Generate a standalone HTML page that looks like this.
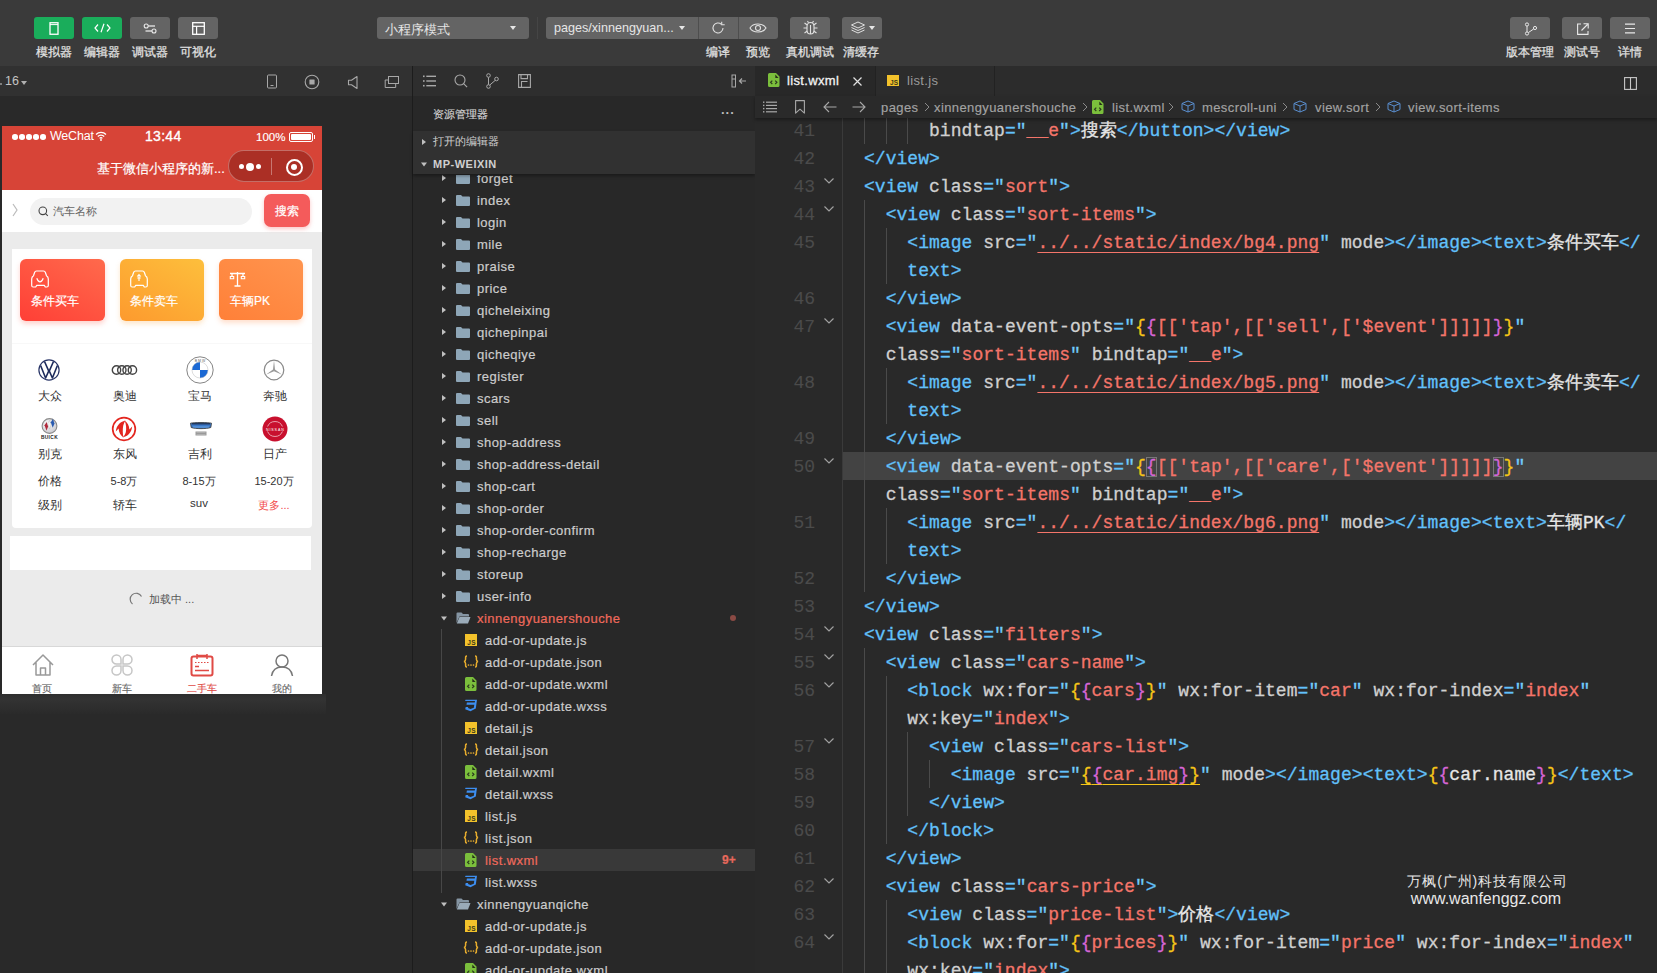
<!DOCTYPE html>
<html><head><meta charset="utf-8">
<style>
*{margin:0;padding:0;box-sizing:border-box}
html,body{width:1657px;height:973px;overflow:hidden;background:#262626;font-family:"Liberation Sans",sans-serif}
.a{position:absolute}
#tb{left:0;top:0;width:1657px;height:66px;background:#3a3a3a}
.btn{position:absolute;top:17px;height:22px;border-radius:3px;background:#646464}
.btn.g{background:#1aad5b}
.lbl{position:absolute;top:44px;font-size:12px;color:#e2e2e2;text-align:center;white-space:nowrap;-webkit-text-stroke:0.25px}
#simh{left:0;top:66px;width:412px;height:30px;background:#313131}
#sim{left:0;top:96px;width:412px;height:877px;background:#292929}
#div1{left:412px;top:66px;width:1px;height:907px;background:#1c1c1c}
#tree{left:413px;top:66px;width:342px;height:907px;background:#2e2e2e}
#ed{left:755px;top:66px;width:902px;height:907px;background:#262626}
.lab{font-size:11.5px;color:#333;width:26px;text-align:center;white-space:nowrap}
.lab2{font-size:11px;color:#333;text-align:center;white-space:nowrap}
.tl{top:556px;width:40px;text-align:center;font-size:10px;color:#6a6a6a;-webkit-text-stroke:0.15px}
.tr{position:absolute;left:0;width:342px;height:22px;font-size:13px;letter-spacing:0.45px}
.tr span{white-space:nowrap;-webkit-text-stroke:0.2px}
.code{font-family:"Liberation Mono",monospace;font-size:18px;line-height:28px;height:28px;white-space:pre;padding-top:1px;-webkit-text-stroke:0.3px;letter-spacing:0.037px}
.code span{white-space:pre}
.ln{left:0;width:60px;text-align:right;font-family:"Liberation Mono",monospace;font-size:18px;line-height:28px;color:#4b4b4b;padding-top:1px;-webkit-text-stroke:0.1px}
.bc{font-size:13px;color:#a3a3a3;white-space:nowrap;letter-spacing:0.4px;padding-top:1px;-webkit-text-stroke:0.15px}
</style></head><body>
<div id="tb" class="a">
<div class="btn g" style="left:34px;width:40px"><svg class="a" style="left:15px;top:5px" width="10" height="13" viewBox="0 0 10 13"><rect x="1" y="0.75" width="8" height="11.5" fill="none" stroke="#fff" stroke-width="1.3"/><line x1="1" y1="2.6" x2="9" y2="2.6" stroke="#fff" stroke-width="1"/></svg></div>
<div class="btn g" style="left:82px;width:40px"><svg class="a" style="left:12px;top:6px" width="17" height="10" viewBox="0 0 17 10"><path d="M4 1.5L1 5l3 3.5M13 1.5l3 3.5-3 3.5M10 0.8L7 9.2" fill="none" stroke="#fff" stroke-width="1.2"/></svg></div>
<div class="btn" style="left:130px;width:40px"><svg class="a" style="left:13px;top:6px" width="15" height="11" viewBox="0 0 15 11"><circle cx="3.2" cy="3" r="2" fill="none" stroke="#e8e8e8" stroke-width="1.1"/><line x1="5.2" y1="3" x2="12" y2="3" stroke="#e8e8e8" stroke-width="1.3"/><circle cx="11" cy="8" r="2" fill="none" stroke="#e8e8e8" stroke-width="1.1"/><line x1="2.5" y1="8" x2="9" y2="8" stroke="#e8e8e8" stroke-width="1.3"/></svg></div>
<div class="btn" style="left:178px;width:40px"><svg class="a" style="left:14px;top:5px" width="13" height="13" viewBox="0 0 13 13"><rect x="0.7" y="0.7" width="11.6" height="11.6" fill="none" stroke="#fff" stroke-width="1.3"/><line x1="0.7" y1="4.3" x2="12.3" y2="4.3" stroke="#fff" stroke-width="1.2"/><line x1="4.6" y1="4.3" x2="4.6" y2="12.3" stroke="#fff" stroke-width="1.2"/></svg></div>
<div class="lbl" style="left:34px;width:40px">模拟器</div>
<div class="lbl" style="left:82px;width:40px">编辑器</div>
<div class="lbl" style="left:130px;width:40px">调试器</div>
<div class="lbl" style="left:178px;width:40px">可视化</div>

<div class="btn" style="left:377px;width:152px"><span class="a" style="left:8px;top:4px;font-size:13px;color:#e6e6e6">小程序模式</span><svg class="a" style="left:133px;top:9px" width="6" height="4"><path d="M0 0h6L3 4z" fill="#e6e6e6"/></svg></div>
<div class="a" style="left:537px;top:17px;width:1px;height:22px;background:#454545"></div>
<div class="btn" style="left:546px;width:232px"><span class="a" style="left:8px;top:4px;font-size:12.6px;color:#e6e6e6">pages/xinnengyuan...</span><svg class="a" style="left:133px;top:9px" width="6" height="4"><path d="M0 0h6L3 4z" fill="#e6e6e6"/></svg>
<div class="a" style="left:152px;top:0;width:1px;height:22px;background:#4e4e4e"></div><div class="a" style="left:192px;top:0;width:1px;height:22px;background:#4e4e4e"></div>
<svg class="a" style="left:164px;top:3px" width="16" height="16" viewBox="0 0 16 16"><path d="M13 8a5 5 0 1 1-1.6-3.7" fill="none" stroke="#e0e0e0" stroke-width="1.1"/><path d="M11.7 1.8v3h3" fill="none" stroke="#e0e0e0" stroke-width="1.1"/></svg>
<svg class="a" style="left:203px;top:5px" width="18" height="12" viewBox="0 0 18 12"><path d="M1 6C4 0.6 14 0.6 17 6C14 11.4 4 11.4 1 6z" fill="none" stroke="#e0e0e0" stroke-width="1.1"/><circle cx="9" cy="6" r="2.5" fill="none" stroke="#e0e0e0" stroke-width="1.1"/></svg>
</div>
<div class="btn" style="left:790px;width:40px"><svg class="a" style="left:12px;top:3px" width="17" height="16" viewBox="0 0 17 16"><path d="M5 6.5c0-2.5 1.6-4 3.5-4s3.5 1.5 3.5 4v4c0 2.2-1.6 3.5-3.5 3.5S5 12.7 5 10.5z" fill="none" stroke="#e0e0e0" stroke-width="1.1"/><path d="M8.5 5v9M5 8H1.5M12 8h3.5M5.3 5L2.5 3M11.7 5l2.8-2M5.3 11L2.5 13M11.7 11l2.8 2M6.5 2.8L5.5 1M10.5 2.8l1-1.8" fill="none" stroke="#e0e0e0" stroke-width="1.1"/></svg></div>
<div class="btn" style="left:842px;width:40px"><svg class="a" style="left:8px;top:4px" width="16" height="14" viewBox="0 0 16 14"><path d="M8 1L1.5 4 8 7l6.5-3z" fill="none" stroke="#e0e0e0" stroke-width="1"/><path d="M1.5 6.5L8 9.5l6.5-3M1.5 9L8 12l6.5-3" fill="none" stroke="#e0e0e0" stroke-width="1"/></svg><svg class="a" style="left:27px;top:9px" width="6" height="4"><path d="M0 0h6L3 4z" fill="#e6e6e6"/></svg></div>
<div class="lbl" style="left:698px;width:40px">编译</div>
<div class="lbl" style="left:738px;width:40px">预览</div>
<div class="lbl" style="left:786px;width:48px">真机调试</div>
<div class="lbl" style="left:841px;width:40px">清缓存</div>

<div class="btn" style="left:1510px;width:40px"><svg class="a" style="left:14px;top:5px" width="14" height="14" viewBox="0 0 14 14"><circle cx="3" cy="2.5" r="1.6" fill="none" stroke="#e8e8e8" stroke-width="1"/><circle cx="3" cy="11.5" r="1.6" fill="none" stroke="#e8e8e8" stroke-width="1"/><circle cx="11" cy="6" r="1.6" fill="none" stroke="#e8e8e8" stroke-width="1"/><path d="M3 4.1v5.8M4.5 10.5L9.6 7" fill="none" stroke="#e8e8e8" stroke-width="1"/></svg></div>
<div class="btn" style="left:1562px;width:40px"><svg class="a" style="left:15px;top:6px" width="12" height="12" viewBox="0 0 12 12"><path d="M4 1H0.6v10.4H11V8" fill="none" stroke="#e8e8e8" stroke-width="1.1"/><path d="M4.5 7.5L10.5 1.5M6.5 0.8h4.7v4.7" fill="none" stroke="#e8e8e8" stroke-width="1.1"/></svg></div>
<div class="btn" style="left:1610px;width:40px"><svg class="a" style="left:15px;top:6px" width="10" height="11" viewBox="0 0 10 11"><path d="M0 1.2h10M0 5.5h10M0 9.8h10" stroke="#e8e8e8" stroke-width="1.2"/></svg></div>
<div class="lbl" style="left:1502px;width:56px">版本管理</div>
<div class="lbl" style="left:1562px;width:40px">测试号</div>
<div class="lbl" style="left:1610px;width:40px">详情</div>
</div>

<div id="simh" class="a">
<div class="a" style="left:0;top:17px;width:2px;height:2px;border-radius:1px;background:#9a9a9a"></div>
<span class="a" style="left:5px;top:8px;font-size:12.5px;color:#c4c4c4">16</span>
<svg class="a" style="left:21px;top:15px" width="6" height="4"><path d="M0 0h6L3 4z" fill="#b0b0b0"/></svg>
<svg class="a" style="left:266px;top:8px" width="12" height="15" viewBox="0 0 12 15"><rect x="1.5" y="1" width="9" height="13" rx="1" fill="none" stroke="#a8a8a8" stroke-width="1"/><line x1="4.5" y1="11.5" x2="7.5" y2="11.5" stroke="#a8a8a8" stroke-width="1"/></svg>
<svg class="a" style="left:304px;top:8px" width="16" height="16" viewBox="0 0 16 16"><circle cx="8" cy="8" r="6.8" fill="none" stroke="#a8a8a8" stroke-width="1.1"/><rect x="5.4" y="5.4" width="5.2" height="5.2" rx="0.5" fill="#a8a8a8"/></svg>
<svg class="a" style="left:347px;top:9px" width="12" height="15" viewBox="0 0 12 15"><path d="M10 1.5v12L4.5 9.8H1.5V5.2h3z" fill="none" stroke="#a8a8a8" stroke-width="1.1" stroke-linejoin="round"/></svg>
<svg class="a" style="left:384px;top:9px" width="16" height="14" viewBox="0 0 16 14"><rect x="4.5" y="1.5" width="10" height="7" fill="none" stroke="#a8a8a8" stroke-width="1"/><path d="M4.5 5H1.2v7.5h10.5V8.5" fill="none" stroke="#a8a8a8" stroke-width="1"/></svg>
</div>
<div id="sim" class="a"></div>
<div class="a" style="left:0;top:694px;width:326px;height:20px;background:linear-gradient(180deg,#2e2e2e 0%,#333 25%,#2a2a2a 100%)"></div>
<div id="phone" class="a" style="left:2px;top:126px;width:320px;height:568px;background:#ebebeb;overflow:hidden">
 <div class="a" style="left:0;top:0;width:320px;height:64px;background:#d74437"></div>
 <div class="a" style="left:10px;top:8px;width:35px;height:6px">
  <i class="a" style="left:0;top:0;width:5.5px;height:5.5px;border-radius:50%;background:#fff"></i><i class="a" style="left:7px;top:0;width:5.5px;height:5.5px;border-radius:50%;background:#fff"></i><i class="a" style="left:14px;top:0;width:5.5px;height:5.5px;border-radius:50%;background:#fff"></i><i class="a" style="left:21px;top:0;width:5.5px;height:5.5px;border-radius:50%;background:#fff"></i><i class="a" style="left:28px;top:0;width:5.5px;height:5.5px;border-radius:50%;background:#fff"></i>
 </div>
 <span class="a" style="left:48px;top:3px;font-size:12.5px;color:#fff;letter-spacing:-0.2px">WeChat</span>
 <svg class="a" style="left:93px;top:5px" width="12" height="10" viewBox="0 0 12 10"><path d="M1 3.5a7 7 0 0 1 10 0M2.8 5.5a4.5 4.5 0 0 1 6.4 0M4.6 7.4a2 2 0 0 1 2.8 0" fill="none" stroke="#fff" stroke-width="1.3"/><circle cx="6" cy="9" r="0.9" fill="#fff"/></svg>
 <span class="a" style="left:143px;top:2px;font-size:14px;color:#fff;-webkit-text-stroke:0.35px;letter-spacing:0.3px">13:44</span>
 <span class="a" style="left:254px;top:5px;font-size:11.5px;color:#fff;-webkit-text-stroke:0.15px">100%</span>
 <div class="a" style="left:287px;top:6px;width:24px;height:10px;border:1px solid #fff;border-radius:2px;padding:1px"><div style="width:100%;height:100%;background:#fff;border-radius:1px"></div></div>
 <div class="a" style="left:311.5px;top:9px;width:1.5px;height:4px;background:#fff"></div>
 <span class="a" style="left:95px;top:34px;font-size:13px;color:#fff;white-space:nowrap;-webkit-text-stroke:0.2px">基于微信小程序的新...</span>
 <div class="a" style="left:226px;top:24px;width:86px;height:32px;border-radius:16px;background:rgba(90,10,5,0.35);border:1px solid rgba(255,255,255,0.3)"></div>
 <i class="a" style="left:237px;top:38px;width:5px;height:5px;border-radius:50%;background:#fff"></i>
 <i class="a" style="left:244px;top:36.5px;width:8px;height:8px;border-radius:50%;background:#fff"></i>
 <i class="a" style="left:254px;top:38px;width:5px;height:5px;border-radius:50%;background:#fff"></i>
 <div class="a" style="left:269px;top:32px;width:1px;height:17px;background:rgba(255,255,255,0.35)"></div>
 <div class="a" style="left:283.5px;top:32.5px;width:17px;height:17px;border-radius:50%;border:2.2px solid #fff"></div>
 <i class="a" style="left:289px;top:38px;width:6px;height:6px;border-radius:50%;background:#fff"></i>

 <div class="a" style="left:0;top:64px;width:320px;height:42px;background:#fff"></div>
 <svg class="a" style="left:10px;top:77px" width="6" height="14" viewBox="0 0 6 14"><path d="M1 1l4 6-4 6" fill="none" stroke="#bbb" stroke-width="1.2"/></svg>
 <div class="a" style="left:28px;top:72px;width:222px;height:27px;border-radius:14px;background:#f2f2f2"></div>
 <svg class="a" style="left:36px;top:80px" width="11" height="11" viewBox="0 0 11 11"><circle cx="4.8" cy="4.8" r="3.8" fill="none" stroke="#444" stroke-width="1.1"/><path d="M7.6 7.6l2.2 2.2" stroke="#444" stroke-width="1.1"/></svg>
 <span class="a" style="left:51px;top:78px;font-size:11px;color:#666">汽车名称</span>
 <div class="a" style="left:262px;top:68px;width:46px;height:33px;border-radius:7px;background:#f45b5b;box-shadow:0 2px 4px rgba(244,91,91,0.35)"></div>
 <span class="a" style="left:273px;top:78px;font-size:11.5px;color:#fff;-webkit-text-stroke:0.2px">搜索</span>

 <div class="a" style="left:10px;top:123px;width:300px;height:279px;background:#fff;border-radius:0 0 4px 4px"></div>
 <div class="a" style="left:18px;top:133px;width:85px;height:62px;border-radius:6px;background:linear-gradient(30deg,#ff3f36 0%,#ff6a4c 100%);box-shadow:0 3px 5px rgba(255,80,60,0.25)"></div>
 <div class="a" style="left:118px;top:133px;width:84px;height:62px;border-radius:6px;background:linear-gradient(30deg,#fd9a2e 0%,#fdbf3c 100%);box-shadow:0 3px 5px rgba(253,160,50,0.25)"></div>
 <div class="a" style="left:217px;top:133px;width:84px;height:61px;border-radius:6px;background:linear-gradient(30deg,#ff8038 0%,#ff944e 100%);box-shadow:0 3px 5px rgba(255,130,60,0.25)"></div>
 <svg class="a" style="left:29px;top:144px" width="18" height="18" viewBox="0 0 18 18"><path d="M5.5 1h7c1 0 1.6.6 1.9 1.5l1.1 3.3c1.2.7 1.8 1.9 1.8 3.3v6.4c0 .8-.6 1.5-1.5 1.5h-1.5l-1-1.6H5.7l-1 1.6H2.2c-.9 0-1.5-.7-1.5-1.5V9.1c0-1.4.6-2.6 1.8-3.3l1.1-3.3C3.9 1.6 4.5 1 5.5 1z" fill="none" stroke="#fff" stroke-width="1.2" stroke-linejoin="round"/><path d="M5.8 8.2c.9 2.6 2 3.7 3.2 3.7s2.3-1.1 3.2-3.7" fill="none" stroke="#fff" stroke-width="1.2"/></svg>
 <span class="a" style="left:29px;top:167px;font-size:12px;color:#fff;-webkit-text-stroke:0.2px">条件买车</span>
 <svg class="a" style="left:128px;top:144px" width="18" height="18" viewBox="0 0 18 18"><path d="M5.5 1h7c1 0 1.6.6 1.9 1.5l1.1 3.3c1.2.7 1.8 1.9 1.8 3.3v6.4c0 .8-.6 1.5-1.5 1.5h-1.5l-1-1.6H5.7l-1 1.6H2.2c-.9 0-1.5-.7-1.5-1.5V9.1c0-1.4.6-2.6 1.8-3.3l1.1-3.3C3.9 1.6 4.5 1 5.5 1z" fill="none" stroke="#fff" stroke-width="1.2" stroke-linejoin="round"/><path d="M9 4.5v6.5M7.2 6.5L9 4.5l1.8 2M7.3 8h3.4" fill="none" stroke="#fff" stroke-width="1.1"/></svg>
 <span class="a" style="left:128px;top:167px;font-size:12px;color:#fff;-webkit-text-stroke:0.2px">条件卖车</span>
 <svg class="a" style="left:227px;top:145px" width="17" height="16" viewBox="0 0 17 16"><path d="M1 2.5h15M8.5 1v14M5.5 15h6M3 2.5v3M14 2.5v3" fill="none" stroke="#fff" stroke-width="1.3"/><path d="M1.3 5.5h3.4v2.3H1.3zM12.3 5.5h3.4v2.3h-3.4z" fill="none" stroke="#fff" stroke-width="1.1"/></svg>
 <span class="a" style="left:228px;top:167px;font-size:12px;color:#fff;-webkit-text-stroke:0.2px">车辆PK</span>
 <div class="a" style="left:10px;top:217px;width:300px;height:1px;background:#f8f8f8"></div>

 <!-- brands -->
 <svg class="a" style="left:36px;top:233px" width="22" height="22" viewBox="0 0 22 22"><circle cx="11" cy="11" r="10.1" fill="none" stroke="#2a3668" stroke-width="1.2"/><path d="M2.6 6.5L7.6 19l3.4-7.6 3.4 7.6 5-12.5M6.5 2.5L11 12.6l4.5-10.1" fill="none" stroke="#1d2b5c" stroke-width="1.6" stroke-linejoin="round"/></svg>
 <svg class="a" style="left:109px;top:238px" width="27" height="12" viewBox="0 0 27 12"><g fill="none" stroke="#444" stroke-width="1.4"><circle cx="5.5" cy="6" r="4.2"/><circle cx="10.8" cy="6" r="4.2"/><circle cx="16.1" cy="6" r="4.2"/><circle cx="21.4" cy="6" r="4.2"/></g></svg>
 <svg class="a" style="left:184px;top:230px" width="28" height="28" viewBox="0 0 28 28"><circle cx="14" cy="14" r="13.2" fill="#fff" stroke="#777" stroke-width="0.9"/><circle cx="14" cy="14" r="8" fill="#fff"/><path d="M14 14V6A8 8 0 0 0 6 14z M14 14v8a8 8 0 0 0 8-8z" fill="#1c69d4"/><circle cx="14" cy="14" r="8" fill="none" stroke="#bbb" stroke-width="0.5"/><text x="14" y="5.5" font-size="3.5" text-anchor="middle" fill="#666" font-family="Liberation Sans">B M W</text></svg>
 <svg class="a" style="left:261px;top:233px" width="22" height="22" viewBox="0 0 22 22"><circle cx="11" cy="11" r="9.8" fill="none" stroke="#888" stroke-width="1.2"/><path d="M11 1.5L12 10.5 19.2 15.8 11 12.2 2.8 15.8 10 10.5z" fill="#9a9a9a"/></svg>

 <span class="a lab" style="left:35px;top:263px">大众</span>
 <span class="a lab" style="left:110px;top:263px">奥迪</span>
 <span class="a lab" style="left:185px;top:263px">宝马</span>
 <span class="a lab" style="left:260px;top:263px">奔驰</span>

 <svg class="a" style="left:37px;top:291px" width="22" height="24" viewBox="0 0 22 24"><defs><radialGradient id="bg1" cx="0.4" cy="0.35" r="0.7"><stop offset="0" stop-color="#fafafa"/><stop offset="1" stop-color="#c9c9cf"/></radialGradient></defs><circle cx="10.5" cy="9" r="7.4" fill="url(#bg1)" stroke="#8a8a8a" stroke-width="1.1"/><path d="M5.6 8.3l2.1-3.2 1.4 4.4-1.6 4.3z" fill="#b0283a"/><path d="M8.6 6.6l2.1-3.2 1.4 4.4-1.6 4.3z" fill="#f4f4f4" stroke="#999" stroke-width="0.3"/><path d="M11.8 5.2l2.1-3.2 1.6 4.4-1.8 4.3z" fill="#2a5bb0"/><text x="10.5" y="22" font-size="4.8" font-weight="bold" text-anchor="middle" fill="#222" font-family="Liberation Sans" letter-spacing="0.4">BUICK</text></svg>
 <svg class="a" style="left:109px;top:290px" width="26" height="26" viewBox="0 0 26 26"><circle cx="13" cy="13" r="11.3" fill="none" stroke="#e3261f" stroke-width="1.7"/><path d="M14.5 4.6C8.5 6 5.5 10 4.8 15.6L7.6 12.6C7.8 16.5 9.5 19.5 12.5 21.5C11.6 18 11.6 13 12.2 9.8 12.8 7.6 13.6 5.8 14.5 4.6z" fill="#e3261f"/><path d="M11.5 21.4C17.5 20 20.5 16 21.2 10.4L18.4 13.4C18.2 9.5 16.5 6.5 13.5 4.5 15.2 8 15.6 13 14.8 16.2 14.2 18.4 13 20.2 11.5 21.4z" fill="#e3261f"/></svg>
 <svg class="a" style="left:188px;top:296px" width="22" height="16" viewBox="0 0 22 16"><path d="M0.5 1.2C4 0.3 18 0.3 21.5 1.2L20.8 5.5C17 7 5 7 1.2 5.5z" fill="#3a78c8" stroke="#333" stroke-width="0.8"/><path d="M2 1.8h18" stroke="#1f2c48" stroke-width="1.2"/><path d="M3 5h16" stroke="#8fc0f0" stroke-width="0.6"/><rect x="5.5" y="9.5" width="11" height="4" fill="#9a9a9a"/><path d="M6.5 10.5h9M6.5 12.5h9" stroke="#cfcfcf" stroke-width="0.4"/></svg>
 <svg class="a" style="left:260px;top:290px" width="26" height="26" viewBox="0 0 26 26"><circle cx="13" cy="13" r="12.5" fill="#c8102e"/><path d="M5.6 10.5A8 8 0 0 1 20.4 10.5M5.6 15.5A8 8 0 0 0 20.4 15.5" fill="none" stroke="#fff" stroke-width="0.6"/><text x="13.3" y="14.5" font-size="3.6" text-anchor="middle" fill="#fff" font-family="Liberation Sans" letter-spacing="0.9">NISSAN</text></svg>
 <span class="a lab" style="left:35px;top:321px">别克</span>
 <span class="a lab" style="left:110px;top:321px">东风</span>
 <span class="a lab" style="left:185px;top:321px">吉利</span>
 <span class="a lab" style="left:260px;top:321px">日产</span>

 <span class="a lab" style="left:35px;top:348px">价格</span>
 <span class="a lab2" style="left:92px;width:60px;top:348px">5-8万</span>
 <span class="a lab2" style="left:167px;width:60px;top:348px">8-15万</span>
 <span class="a lab2" style="left:242px;width:60px;top:348px">15-20万</span>
 <span class="a lab" style="left:35px;top:372px">级别</span>
 <span class="a lab" style="left:110px;top:372px">轿车</span>
 <span class="a lab2" style="left:167px;width:60px;top:371px;font-size:11.5px">suv</span>
 <span class="a lab2" style="left:242px;width:60px;top:372px;color:#f24a4a">更多...</span>

 <div class="a" style="left:8px;top:410px;width:301px;height:34px;background:#fff"></div>
 <svg class="a" style="left:127px;top:466px" width="14" height="14" viewBox="0 0 14 14"><path d="M3.5 12A6 6 0 1 1 12.5 4.5" fill="none" stroke="#777" stroke-width="1.2"/></svg>
 <span class="a" style="left:147px;top:466px;font-size:11px;color:#555">加载中 ...</span>

 <div class="a" style="left:0;top:520px;width:320px;height:48px;background:#fff;border-top:1px solid #d8d8d8"></div>
 <svg class="a" style="left:29px;top:527px" width="24" height="24" viewBox="0 0 24 24"><path d="M2 12L12 2l10 10M5 9.5V22h14V9.5M9.5 22v-7h5v7" fill="none" stroke="#999" stroke-width="1.5" stroke-linejoin="round"/></svg>
 <svg class="a" style="left:108px;top:527px" width="24" height="24" viewBox="0 0 24 24"><g fill="none" stroke="#c6c6c6" stroke-width="1.5"><path d="M11 11H6.5A4.5 4.5 0 1 1 11 6.5z"/><path d="M13 11h4.5A4.5 4.5 0 1 0 13 6.5z"/><path d="M11 13H6.5A4.5 4.5 0 1 0 11 17.5z"/><path d="M13 13h4.5A4.5 4.5 0 1 1 13 17.5z"/></g></svg>
 <svg class="a" style="left:188px;top:527px" width="24" height="24" viewBox="0 0 24 24"><rect x="1.5" y="3.5" width="21" height="19" rx="2" fill="none" stroke="#e04a45" stroke-width="2"/><path d="M7 1v5M17 1v5M7 2.5h10" stroke="#e04a45" stroke-width="1.5"/><path d="M5 9.5h14" stroke="#e04a45" stroke-width="1" stroke-dasharray="1.5 1.5"/><path d="M5 13.5h4M5 17.5h14" stroke="#e04a45" stroke-width="1.6"/></svg>
 <svg class="a" style="left:268px;top:527px" width="24" height="24" viewBox="0 0 24 24"><circle cx="12" cy="8" r="6" fill="none" stroke="#777" stroke-width="1.5"/><path d="M1.5 23c1-6 5-9 10.5-9s9.5 3 10.5 9" fill="none" stroke="#777" stroke-width="1.5"/></svg>
 <span class="a tl" style="left:20px">首页</span>
 <span class="a tl" style="left:100px">新车</span>
 <span class="a tl" style="left:180px;color:#e04a45">二手车</span>
 <span class="a tl" style="left:260px">我的</span>
</div>

<div id="div1" class="a"></div>
<div id="tree" class="a">
<svg class="a" style="left:10px;top:9px" width="13" height="12" viewBox="0 0 13 12"><g fill="#a8a8a8"><rect x="0" y="0.5" width="1.6" height="1.6"/><rect x="0" y="5.2" width="1.6" height="1.6"/><rect x="0" y="9.9" width="1.6" height="1.6"/><rect x="3.3" y="0.6" width="9.7" height="1.4"/><rect x="3.3" y="5.3" width="9.7" height="1.4"/><rect x="3.3" y="10" width="9.7" height="1.4"/></g></svg>
<svg class="a" style="left:41px;top:8px" width="14" height="14" viewBox="0 0 14 14"><circle cx="6" cy="6" r="5" fill="none" stroke="#a8a8a8" stroke-width="1.1"/><path d="M9.6 9.6l3.5 3.5" stroke="#a8a8a8" stroke-width="1.1"/></svg>
<svg class="a" style="left:73px;top:7px" width="13" height="16" viewBox="0 0 13 16"><circle cx="2.5" cy="2.5" r="1.8" fill="none" stroke="#a8a8a8" stroke-width="1"/><circle cx="2.5" cy="13.5" r="1.8" fill="none" stroke="#a8a8a8" stroke-width="1"/><circle cx="10.5" cy="6" r="1.8" fill="none" stroke="#a8a8a8" stroke-width="1"/><path d="M2.5 4.3v7.4M3.8 12L9.3 7.3" fill="none" stroke="#a8a8a8" stroke-width="1"/></svg>
<svg class="a" style="left:105px;top:8px" width="13" height="14" viewBox="0 0 13 14"><path d="M0.6 0.6h11.8v12.8H0.6zM3 0.6v4h6.5v-4M9.5 7.5H3.5V13.4" fill="none" stroke="#a8a8a8" stroke-width="1.1"/></svg>
<svg class="a" style="left:318px;top:8px" width="16" height="14" viewBox="0 0 16 14"><rect x="1" y="1" width="3.5" height="12" fill="none" stroke="#a8a8a8" stroke-width="1"/><path d="M1 5h3.5" stroke="#a8a8a8" stroke-width="1"/><path d="M15 7H8.5M11 4.5L8.5 7 11 9.5" fill="none" stroke="#a8a8a8" stroke-width="1.2"/></svg>
<div class="a" style="left:0;top:30px;width:342px;height:877px;background:#282828"></div>
<span class="a" style="left:20px;top:41px;font-size:11px;color:#d4d4d4;-webkit-text-stroke:0.15px">资源管理器</span>
<span class="a" style="left:308px;top:36px;font-size:13px;color:#bbb;letter-spacing:1px;font-weight:bold">...</span>
<div class="a" style="left:0;top:109px;width:342px;height:798px;overflow:hidden">
<div class="tr" style="top:-8px"><svg class="a" style="left:28px;top:8px" width="6" height="6"><path d="M1 0v6l4-3z" fill="#c0c0c0"/></svg><svg class="a" style="left:43px;top:6px" width="14" height="11" viewBox="0 0 14 11"><path d="M0 1a1 1 0 0 1 1-1h4l1.5 1.5H13a1 1 0 0 1 1 1V10a1 1 0 0 1-1 1H1a1 1 0 0 1-1-1z" fill="#8ea6b7"/></svg><span class="a" style="left:64px;top:4px;color:#cccccc">forget</span></div>
<div class="tr" style="top:14px"><svg class="a" style="left:28px;top:8px" width="6" height="6"><path d="M1 0v6l4-3z" fill="#c0c0c0"/></svg><svg class="a" style="left:43px;top:6px" width="14" height="11" viewBox="0 0 14 11"><path d="M0 1a1 1 0 0 1 1-1h4l1.5 1.5H13a1 1 0 0 1 1 1V10a1 1 0 0 1-1 1H1a1 1 0 0 1-1-1z" fill="#8ea6b7"/></svg><span class="a" style="left:64px;top:4px;color:#cccccc">index</span></div>
<div class="tr" style="top:36px"><svg class="a" style="left:28px;top:8px" width="6" height="6"><path d="M1 0v6l4-3z" fill="#c0c0c0"/></svg><svg class="a" style="left:43px;top:6px" width="14" height="11" viewBox="0 0 14 11"><path d="M0 1a1 1 0 0 1 1-1h4l1.5 1.5H13a1 1 0 0 1 1 1V10a1 1 0 0 1-1 1H1a1 1 0 0 1-1-1z" fill="#8ea6b7"/></svg><span class="a" style="left:64px;top:4px;color:#cccccc">login</span></div>
<div class="tr" style="top:58px"><svg class="a" style="left:28px;top:8px" width="6" height="6"><path d="M1 0v6l4-3z" fill="#c0c0c0"/></svg><svg class="a" style="left:43px;top:6px" width="14" height="11" viewBox="0 0 14 11"><path d="M0 1a1 1 0 0 1 1-1h4l1.5 1.5H13a1 1 0 0 1 1 1V10a1 1 0 0 1-1 1H1a1 1 0 0 1-1-1z" fill="#8ea6b7"/></svg><span class="a" style="left:64px;top:4px;color:#cccccc">mile</span></div>
<div class="tr" style="top:80px"><svg class="a" style="left:28px;top:8px" width="6" height="6"><path d="M1 0v6l4-3z" fill="#c0c0c0"/></svg><svg class="a" style="left:43px;top:6px" width="14" height="11" viewBox="0 0 14 11"><path d="M0 1a1 1 0 0 1 1-1h4l1.5 1.5H13a1 1 0 0 1 1 1V10a1 1 0 0 1-1 1H1a1 1 0 0 1-1-1z" fill="#8ea6b7"/></svg><span class="a" style="left:64px;top:4px;color:#cccccc">praise</span></div>
<div class="tr" style="top:102px"><svg class="a" style="left:28px;top:8px" width="6" height="6"><path d="M1 0v6l4-3z" fill="#c0c0c0"/></svg><svg class="a" style="left:43px;top:6px" width="14" height="11" viewBox="0 0 14 11"><path d="M0 1a1 1 0 0 1 1-1h4l1.5 1.5H13a1 1 0 0 1 1 1V10a1 1 0 0 1-1 1H1a1 1 0 0 1-1-1z" fill="#8ea6b7"/></svg><span class="a" style="left:64px;top:4px;color:#cccccc">price</span></div>
<div class="tr" style="top:124px"><svg class="a" style="left:28px;top:8px" width="6" height="6"><path d="M1 0v6l4-3z" fill="#c0c0c0"/></svg><svg class="a" style="left:43px;top:6px" width="14" height="11" viewBox="0 0 14 11"><path d="M0 1a1 1 0 0 1 1-1h4l1.5 1.5H13a1 1 0 0 1 1 1V10a1 1 0 0 1-1 1H1a1 1 0 0 1-1-1z" fill="#8ea6b7"/></svg><span class="a" style="left:64px;top:4px;color:#cccccc">qicheleixing</span></div>
<div class="tr" style="top:146px"><svg class="a" style="left:28px;top:8px" width="6" height="6"><path d="M1 0v6l4-3z" fill="#c0c0c0"/></svg><svg class="a" style="left:43px;top:6px" width="14" height="11" viewBox="0 0 14 11"><path d="M0 1a1 1 0 0 1 1-1h4l1.5 1.5H13a1 1 0 0 1 1 1V10a1 1 0 0 1-1 1H1a1 1 0 0 1-1-1z" fill="#8ea6b7"/></svg><span class="a" style="left:64px;top:4px;color:#cccccc">qichepinpai</span></div>
<div class="tr" style="top:168px"><svg class="a" style="left:28px;top:8px" width="6" height="6"><path d="M1 0v6l4-3z" fill="#c0c0c0"/></svg><svg class="a" style="left:43px;top:6px" width="14" height="11" viewBox="0 0 14 11"><path d="M0 1a1 1 0 0 1 1-1h4l1.5 1.5H13a1 1 0 0 1 1 1V10a1 1 0 0 1-1 1H1a1 1 0 0 1-1-1z" fill="#8ea6b7"/></svg><span class="a" style="left:64px;top:4px;color:#cccccc">qicheqiye</span></div>
<div class="tr" style="top:190px"><svg class="a" style="left:28px;top:8px" width="6" height="6"><path d="M1 0v6l4-3z" fill="#c0c0c0"/></svg><svg class="a" style="left:43px;top:6px" width="14" height="11" viewBox="0 0 14 11"><path d="M0 1a1 1 0 0 1 1-1h4l1.5 1.5H13a1 1 0 0 1 1 1V10a1 1 0 0 1-1 1H1a1 1 0 0 1-1-1z" fill="#8ea6b7"/></svg><span class="a" style="left:64px;top:4px;color:#cccccc">register</span></div>
<div class="tr" style="top:212px"><svg class="a" style="left:28px;top:8px" width="6" height="6"><path d="M1 0v6l4-3z" fill="#c0c0c0"/></svg><svg class="a" style="left:43px;top:6px" width="14" height="11" viewBox="0 0 14 11"><path d="M0 1a1 1 0 0 1 1-1h4l1.5 1.5H13a1 1 0 0 1 1 1V10a1 1 0 0 1-1 1H1a1 1 0 0 1-1-1z" fill="#8ea6b7"/></svg><span class="a" style="left:64px;top:4px;color:#cccccc">scars</span></div>
<div class="tr" style="top:234px"><svg class="a" style="left:28px;top:8px" width="6" height="6"><path d="M1 0v6l4-3z" fill="#c0c0c0"/></svg><svg class="a" style="left:43px;top:6px" width="14" height="11" viewBox="0 0 14 11"><path d="M0 1a1 1 0 0 1 1-1h4l1.5 1.5H13a1 1 0 0 1 1 1V10a1 1 0 0 1-1 1H1a1 1 0 0 1-1-1z" fill="#8ea6b7"/></svg><span class="a" style="left:64px;top:4px;color:#cccccc">sell</span></div>
<div class="tr" style="top:256px"><svg class="a" style="left:28px;top:8px" width="6" height="6"><path d="M1 0v6l4-3z" fill="#c0c0c0"/></svg><svg class="a" style="left:43px;top:6px" width="14" height="11" viewBox="0 0 14 11"><path d="M0 1a1 1 0 0 1 1-1h4l1.5 1.5H13a1 1 0 0 1 1 1V10a1 1 0 0 1-1 1H1a1 1 0 0 1-1-1z" fill="#8ea6b7"/></svg><span class="a" style="left:64px;top:4px;color:#cccccc">shop-address</span></div>
<div class="tr" style="top:278px"><svg class="a" style="left:28px;top:8px" width="6" height="6"><path d="M1 0v6l4-3z" fill="#c0c0c0"/></svg><svg class="a" style="left:43px;top:6px" width="14" height="11" viewBox="0 0 14 11"><path d="M0 1a1 1 0 0 1 1-1h4l1.5 1.5H13a1 1 0 0 1 1 1V10a1 1 0 0 1-1 1H1a1 1 0 0 1-1-1z" fill="#8ea6b7"/></svg><span class="a" style="left:64px;top:4px;color:#cccccc">shop-address-detail</span></div>
<div class="tr" style="top:300px"><svg class="a" style="left:28px;top:8px" width="6" height="6"><path d="M1 0v6l4-3z" fill="#c0c0c0"/></svg><svg class="a" style="left:43px;top:6px" width="14" height="11" viewBox="0 0 14 11"><path d="M0 1a1 1 0 0 1 1-1h4l1.5 1.5H13a1 1 0 0 1 1 1V10a1 1 0 0 1-1 1H1a1 1 0 0 1-1-1z" fill="#8ea6b7"/></svg><span class="a" style="left:64px;top:4px;color:#cccccc">shop-cart</span></div>
<div class="tr" style="top:322px"><svg class="a" style="left:28px;top:8px" width="6" height="6"><path d="M1 0v6l4-3z" fill="#c0c0c0"/></svg><svg class="a" style="left:43px;top:6px" width="14" height="11" viewBox="0 0 14 11"><path d="M0 1a1 1 0 0 1 1-1h4l1.5 1.5H13a1 1 0 0 1 1 1V10a1 1 0 0 1-1 1H1a1 1 0 0 1-1-1z" fill="#8ea6b7"/></svg><span class="a" style="left:64px;top:4px;color:#cccccc">shop-order</span></div>
<div class="tr" style="top:344px"><svg class="a" style="left:28px;top:8px" width="6" height="6"><path d="M1 0v6l4-3z" fill="#c0c0c0"/></svg><svg class="a" style="left:43px;top:6px" width="14" height="11" viewBox="0 0 14 11"><path d="M0 1a1 1 0 0 1 1-1h4l1.5 1.5H13a1 1 0 0 1 1 1V10a1 1 0 0 1-1 1H1a1 1 0 0 1-1-1z" fill="#8ea6b7"/></svg><span class="a" style="left:64px;top:4px;color:#cccccc">shop-order-confirm</span></div>
<div class="tr" style="top:366px"><svg class="a" style="left:28px;top:8px" width="6" height="6"><path d="M1 0v6l4-3z" fill="#c0c0c0"/></svg><svg class="a" style="left:43px;top:6px" width="14" height="11" viewBox="0 0 14 11"><path d="M0 1a1 1 0 0 1 1-1h4l1.5 1.5H13a1 1 0 0 1 1 1V10a1 1 0 0 1-1 1H1a1 1 0 0 1-1-1z" fill="#8ea6b7"/></svg><span class="a" style="left:64px;top:4px;color:#cccccc">shop-recharge</span></div>
<div class="tr" style="top:388px"><svg class="a" style="left:28px;top:8px" width="6" height="6"><path d="M1 0v6l4-3z" fill="#c0c0c0"/></svg><svg class="a" style="left:43px;top:6px" width="14" height="11" viewBox="0 0 14 11"><path d="M0 1a1 1 0 0 1 1-1h4l1.5 1.5H13a1 1 0 0 1 1 1V10a1 1 0 0 1-1 1H1a1 1 0 0 1-1-1z" fill="#8ea6b7"/></svg><span class="a" style="left:64px;top:4px;color:#cccccc">storeup</span></div>
<div class="tr" style="top:410px"><svg class="a" style="left:28px;top:8px" width="6" height="6"><path d="M1 0v6l4-3z" fill="#c0c0c0"/></svg><svg class="a" style="left:43px;top:6px" width="14" height="11" viewBox="0 0 14 11"><path d="M0 1a1 1 0 0 1 1-1h4l1.5 1.5H13a1 1 0 0 1 1 1V10a1 1 0 0 1-1 1H1a1 1 0 0 1-1-1z" fill="#8ea6b7"/></svg><span class="a" style="left:64px;top:4px;color:#cccccc">user-info</span></div>
<div class="tr" style="top:432px"><svg class="a" style="left:28px;top:9px" width="6" height="5"><path d="M0 0.5h6L3 4.5z" fill="#c0c0c0"/></svg><svg class="a" style="left:43px;top:5px" width="15" height="12" viewBox="0 0 15 12"><path d="M0.5 1.5A1 1 0 0 1 1.5 0.5h4l1.5 1.5h5a1 1 0 0 1 1 1v1.5H3.5L0.5 11z" fill="#8595a3"/><path d="M3.5 5h11L12 11.5H0.8z" fill="#9aabb9"/></svg><span class="a" style="left:64px;top:4px;color:#ef6a5c">xinnengyuanershouche</span><i class="a" style="left:317px;top:8px;width:6px;height:6px;border-radius:50%;background:#8a4a44"></i></div>
<div class="tr" style="top:454px;"><svg class="a" style="left:52px;top:5px" width="12" height="12" viewBox="0 0 12 12"><rect width="12" height="12" fill="#f3c22b"/><text x="11" y="10.8" font-size="6.5" font-weight="bold" text-anchor="end" fill="#3a3a1a" font-family="Liberation Sans">JS</text></svg><span class="a" style="left:72px;top:4px;color:#cccccc">add-or-update.js</span></div>
<div class="tr" style="top:476px;"><svg class="a" style="left:50px;top:4px" width="16" height="13" viewBox="0 0 16 13"><path d="M4 1C2.3 1 2.6 2.2 2.6 4.2 2.6 5.6 2 6.3 1 6.5 2 6.7 2.6 7.4 2.6 8.8 2.6 10.8 2.3 12 4 12M12 1c1.7 0 1.4 1.2 1.4 3.2 0 1.4.6 2.1 1.6 2.3-1 .2-1.6.9-1.6 2.3 0 2 .3 3.2-1.4 3.2" fill="none" stroke="#e8ad2e" stroke-width="1.5"/><circle cx="5.5" cy="10" r="0.85" fill="#e8ad2e"/><circle cx="8" cy="10" r="0.85" fill="#e8ad2e"/><circle cx="10.5" cy="10" r="0.85" fill="#e8ad2e"/></svg><span class="a" style="left:72px;top:4px;color:#cccccc">add-or-update.json</span></div>
<div class="tr" style="top:498px;"><svg class="a" style="left:52px;top:4px" width="12" height="14" viewBox="0 0 12 14"><path d="M1.5 0h6.5L11.5 3.5V12.5A1.5 1.5 0 0 1 10 14H1.5A1.5 1.5 0 0 1 0 12.5V1.5A1.5 1.5 0 0 1 1.5 0z" fill="#7bbf3c"/><path d="M7.3 1.6L10.6 4.9H7.3z" fill="#263018"/><path d="M4.3 7.6L2.6 9.3l1.7 1.7M7.2 7.6l1.7 1.7-1.7 1.7" fill="none" stroke="#2c3a1e" stroke-width="1.2"/></svg><span class="a" style="left:72px;top:4px;color:#cccccc">add-or-update.wxml</span></div>
<div class="tr" style="top:520px;"><svg class="a" style="left:51px;top:4px" width="14" height="13" viewBox="0 0 14 13"><path d="M1.5 0.8h11.5l-1.2 8.6L6.5 12.2 1.2 10.2l.5-2.2h2.5l-.2 1 2.5 1 3.3-1.2.5-3H2.5l.4-2.2h7.8l.3-1.6H1.1z" fill="#3d8ef0"/></svg><span class="a" style="left:72px;top:4px;color:#cccccc">add-or-update.wxss</span></div>
<div class="tr" style="top:542px;"><svg class="a" style="left:52px;top:5px" width="12" height="12" viewBox="0 0 12 12"><rect width="12" height="12" fill="#f3c22b"/><text x="11" y="10.8" font-size="6.5" font-weight="bold" text-anchor="end" fill="#3a3a1a" font-family="Liberation Sans">JS</text></svg><span class="a" style="left:72px;top:4px;color:#cccccc">detail.js</span></div>
<div class="tr" style="top:564px;"><svg class="a" style="left:50px;top:4px" width="16" height="13" viewBox="0 0 16 13"><path d="M4 1C2.3 1 2.6 2.2 2.6 4.2 2.6 5.6 2 6.3 1 6.5 2 6.7 2.6 7.4 2.6 8.8 2.6 10.8 2.3 12 4 12M12 1c1.7 0 1.4 1.2 1.4 3.2 0 1.4.6 2.1 1.6 2.3-1 .2-1.6.9-1.6 2.3 0 2 .3 3.2-1.4 3.2" fill="none" stroke="#e8ad2e" stroke-width="1.5"/><circle cx="5.5" cy="10" r="0.85" fill="#e8ad2e"/><circle cx="8" cy="10" r="0.85" fill="#e8ad2e"/><circle cx="10.5" cy="10" r="0.85" fill="#e8ad2e"/></svg><span class="a" style="left:72px;top:4px;color:#cccccc">detail.json</span></div>
<div class="tr" style="top:586px;"><svg class="a" style="left:52px;top:4px" width="12" height="14" viewBox="0 0 12 14"><path d="M1.5 0h6.5L11.5 3.5V12.5A1.5 1.5 0 0 1 10 14H1.5A1.5 1.5 0 0 1 0 12.5V1.5A1.5 1.5 0 0 1 1.5 0z" fill="#7bbf3c"/><path d="M7.3 1.6L10.6 4.9H7.3z" fill="#263018"/><path d="M4.3 7.6L2.6 9.3l1.7 1.7M7.2 7.6l1.7 1.7-1.7 1.7" fill="none" stroke="#2c3a1e" stroke-width="1.2"/></svg><span class="a" style="left:72px;top:4px;color:#cccccc">detail.wxml</span></div>
<div class="tr" style="top:608px;"><svg class="a" style="left:51px;top:4px" width="14" height="13" viewBox="0 0 14 13"><path d="M1.5 0.8h11.5l-1.2 8.6L6.5 12.2 1.2 10.2l.5-2.2h2.5l-.2 1 2.5 1 3.3-1.2.5-3H2.5l.4-2.2h7.8l.3-1.6H1.1z" fill="#3d8ef0"/></svg><span class="a" style="left:72px;top:4px;color:#cccccc">detail.wxss</span></div>
<div class="tr" style="top:630px;"><svg class="a" style="left:52px;top:5px" width="12" height="12" viewBox="0 0 12 12"><rect width="12" height="12" fill="#f3c22b"/><text x="11" y="10.8" font-size="6.5" font-weight="bold" text-anchor="end" fill="#3a3a1a" font-family="Liberation Sans">JS</text></svg><span class="a" style="left:72px;top:4px;color:#cccccc">list.js</span></div>
<div class="tr" style="top:652px;"><svg class="a" style="left:50px;top:4px" width="16" height="13" viewBox="0 0 16 13"><path d="M4 1C2.3 1 2.6 2.2 2.6 4.2 2.6 5.6 2 6.3 1 6.5 2 6.7 2.6 7.4 2.6 8.8 2.6 10.8 2.3 12 4 12M12 1c1.7 0 1.4 1.2 1.4 3.2 0 1.4.6 2.1 1.6 2.3-1 .2-1.6.9-1.6 2.3 0 2 .3 3.2-1.4 3.2" fill="none" stroke="#e8ad2e" stroke-width="1.5"/><circle cx="5.5" cy="10" r="0.85" fill="#e8ad2e"/><circle cx="8" cy="10" r="0.85" fill="#e8ad2e"/><circle cx="10.5" cy="10" r="0.85" fill="#e8ad2e"/></svg><span class="a" style="left:72px;top:4px;color:#cccccc">list.json</span></div>
<div class="tr" style="top:674px;background:#393939;"><svg class="a" style="left:52px;top:4px" width="12" height="14" viewBox="0 0 12 14"><path d="M1.5 0h6.5L11.5 3.5V12.5A1.5 1.5 0 0 1 10 14H1.5A1.5 1.5 0 0 1 0 12.5V1.5A1.5 1.5 0 0 1 1.5 0z" fill="#7bbf3c"/><path d="M7.3 1.6L10.6 4.9H7.3z" fill="#263018"/><path d="M4.3 7.6L2.6 9.3l1.7 1.7M7.2 7.6l1.7 1.7-1.7 1.7" fill="none" stroke="#2c3a1e" stroke-width="1.2"/></svg><span class="a" style="left:72px;top:4px;color:#ef6a5c">list.wxml</span><span class="a" style="left:309px;top:4px;color:#e8695c;font-size:12px;font-weight:bold;letter-spacing:0">9+</span></div>
<div class="tr" style="top:696px;"><svg class="a" style="left:51px;top:4px" width="14" height="13" viewBox="0 0 14 13"><path d="M1.5 0.8h11.5l-1.2 8.6L6.5 12.2 1.2 10.2l.5-2.2h2.5l-.2 1 2.5 1 3.3-1.2.5-3H2.5l.4-2.2h7.8l.3-1.6H1.1z" fill="#3d8ef0"/></svg><span class="a" style="left:72px;top:4px;color:#cccccc">list.wxss</span></div>
<div class="tr" style="top:718px"><svg class="a" style="left:28px;top:9px" width="6" height="5"><path d="M0 0.5h6L3 4.5z" fill="#c0c0c0"/></svg><svg class="a" style="left:43px;top:5px" width="15" height="12" viewBox="0 0 15 12"><path d="M0.5 1.5A1 1 0 0 1 1.5 0.5h4l1.5 1.5h5a1 1 0 0 1 1 1v1.5H3.5L0.5 11z" fill="#8595a3"/><path d="M3.5 5h11L12 11.5H0.8z" fill="#9aabb9"/></svg><span class="a" style="left:64px;top:4px;color:#cccccc">xinnengyuanqiche</span></div>
<div class="tr" style="top:740px;"><svg class="a" style="left:52px;top:5px" width="12" height="12" viewBox="0 0 12 12"><rect width="12" height="12" fill="#f3c22b"/><text x="11" y="10.8" font-size="6.5" font-weight="bold" text-anchor="end" fill="#3a3a1a" font-family="Liberation Sans">JS</text></svg><span class="a" style="left:72px;top:4px;color:#cccccc">add-or-update.js</span></div>
<div class="tr" style="top:762px;"><svg class="a" style="left:50px;top:4px" width="16" height="13" viewBox="0 0 16 13"><path d="M4 1C2.3 1 2.6 2.2 2.6 4.2 2.6 5.6 2 6.3 1 6.5 2 6.7 2.6 7.4 2.6 8.8 2.6 10.8 2.3 12 4 12M12 1c1.7 0 1.4 1.2 1.4 3.2 0 1.4.6 2.1 1.6 2.3-1 .2-1.6.9-1.6 2.3 0 2 .3 3.2-1.4 3.2" fill="none" stroke="#e8ad2e" stroke-width="1.5"/><circle cx="5.5" cy="10" r="0.85" fill="#e8ad2e"/><circle cx="8" cy="10" r="0.85" fill="#e8ad2e"/><circle cx="10.5" cy="10" r="0.85" fill="#e8ad2e"/></svg><span class="a" style="left:72px;top:4px;color:#cccccc">add-or-update.json</span></div>
<div class="tr" style="top:784px;"><svg class="a" style="left:52px;top:4px" width="12" height="14" viewBox="0 0 12 14"><path d="M1.5 0h6.5L11.5 3.5V12.5A1.5 1.5 0 0 1 10 14H1.5A1.5 1.5 0 0 1 0 12.5V1.5A1.5 1.5 0 0 1 1.5 0z" fill="#7bbf3c"/><path d="M7.3 1.6L10.6 4.9H7.3z" fill="#263018"/><path d="M4.3 7.6L2.6 9.3l1.7 1.7M7.2 7.6l1.7 1.7-1.7 1.7" fill="none" stroke="#2c3a1e" stroke-width="1.2"/></svg><span class="a" style="left:72px;top:4px;color:#cccccc">add-or-update.wxml</span></div>
<div class="a" style="left:28px;top:454px;width:1px;height:264px;background:#474747"></div>
</div>
<div class="a" style="left:0;top:65px;width:342px;height:43px;background:#313131;box-shadow:0 2px 3px rgba(0,0,0,0.35)">
<svg class="a" style="left:8px;top:8px" width="6" height="6"><path d="M1 0v6l4-3z" fill="#c0c0c0"/></svg>
<span class="a" style="left:20px;top:3px;font-size:11px;color:#cfcfcf">打开的编辑器</span>
<svg class="a" style="left:8px;top:31px" width="6" height="5"><path d="M0 0.5h6L3 4.5z" fill="#c0c0c0"/></svg>
<span class="a" style="left:20px;top:27px;font-size:11px;color:#cfcfcf;font-weight:bold;letter-spacing:0.5px">MP-WEIXIN</span>
</div>
</div>
<div id="ed" class="a">
<div class="a" style="left:0;top:0;width:902px;height:30px;background:#2c2c2c"></div>
<div class="a" style="left:0;top:0;width:120px;height:30px;background:#282828"></div>
<div class="a" style="left:120px;top:0;width:1px;height:30px;background:#222"></div>
<div class="a" style="left:239px;top:0;width:1px;height:30px;background:#222"></div>
<svg class="a" style="left:13px;top:7px" width="12" height="14" viewBox="0 0 12 14"><path d="M1.5 0h6.5L11.5 3.5V12.5A1.5 1.5 0 0 1 10 14H1.5A1.5 1.5 0 0 1 0 12.5V1.5A1.5 1.5 0 0 1 1.5 0z" fill="#7bbf3c"/><path d="M7.3 1.6L10.6 4.9H7.3z" fill="#263018"/><path d="M4.3 7.6L2.6 9.3l1.7 1.7M7.2 7.6l1.7 1.7-1.7 1.7" fill="none" stroke="#2c3a1e" stroke-width="1.2"/></svg>
<span class="a" style="left:32px;top:7px;font-size:13px;color:#f2f2f2;-webkit-text-stroke:0.3px;letter-spacing:0.35px">list.wxml</span>
<svg class="a" style="left:98px;top:11px" width="9" height="9" viewBox="0 0 9 9"><path d="M0.5 0.5l8 8M8.5 0.5l-8 8" stroke="#e0e0e0" stroke-width="1.2"/></svg>
<svg class="a" style="left:132px;top:9px" width="12" height="11" viewBox="0 0 12 11"><rect width="12" height="11" fill="#f3c22b"/><text x="11" y="10" font-size="6.5" font-weight="bold" text-anchor="end" fill="#3a3a1a" font-family="Liberation Sans">JS</text></svg>
<span class="a" style="left:152px;top:7px;font-size:13px;color:#9a9a9a;letter-spacing:0.35px">list.js</span>
<svg class="a" style="left:869px;top:11px" width="13" height="13" viewBox="0 0 13 13"><rect x="0.6" y="0.6" width="11.8" height="11.8" fill="none" stroke="#c8c8c8" stroke-width="1.1"/><line x1="6.5" y1="0.6" x2="6.5" y2="12.4" stroke="#c8c8c8" stroke-width="1.1"/></svg>
<div class="a" style="left:0;top:30px;width:902px;height:877px;background:#292929"></div>
<div class="a" style="left:109.0px;top:50px;width:1px;height:28px;background:#4a4a4a"></div>
<div class="a" style="left:130.7px;top:50px;width:1px;height:28px;background:#4a4a4a"></div>
<div class="a" style="left:152.3px;top:50px;width:1px;height:28px;background:#4a4a4a"></div>
<div class="a ln" style="top:50px">41</div>
<div class="a code" style="left:174.0px;top:50px"><span style="color:#d0d0d0;">bindtap</span><span style="color:#62c1fb;">=</span><span style="color:#72ccfc;">&quot;</span><span style="color:#f4756a;">__e</span><span style="color:#72ccfc;">&quot;</span><span style="color:#62c1fb;">&gt;</span><span style="color:#e6e6e6;">搜索</span><span style="color:#62c1fb;">&lt;/button&gt;&lt;/view&gt;</span></div>
<div class="a ln" style="top:78px">42</div>
<div class="a code" style="left:109.0px;top:78px"><span style="color:#62c1fb;">&lt;/view&gt;</span></div>
<div class="a ln" style="top:106px">43</div>
<svg class="a" style="left:68px;top:111px" width="12" height="8" viewBox="0 0 12 8"><path d="M1.5 1.5L6 6l4.5-4.5" fill="none" stroke="#a0a0a0" stroke-width="1.2"/></svg>
<div class="a code" style="left:109.0px;top:106px"><span style="color:#62c1fb;">&lt;view</span><span style="color:#d0d0d0;"> class</span><span style="color:#62c1fb;">=</span><span style="color:#72ccfc;">&quot;</span><span style="color:#f4756a;">sort</span><span style="color:#72ccfc;">&quot;</span><span style="color:#62c1fb;">&gt;</span></div>
<div class="a" style="left:109.0px;top:134px;width:1px;height:28px;background:#4a4a4a"></div>
<div class="a ln" style="top:134px">44</div>
<svg class="a" style="left:68px;top:139px" width="12" height="8" viewBox="0 0 12 8"><path d="M1.5 1.5L6 6l4.5-4.5" fill="none" stroke="#a0a0a0" stroke-width="1.2"/></svg>
<div class="a code" style="left:130.7px;top:134px"><span style="color:#62c1fb;">&lt;view</span><span style="color:#d0d0d0;"> class</span><span style="color:#62c1fb;">=</span><span style="color:#72ccfc;">&quot;</span><span style="color:#f4756a;">sort-items</span><span style="color:#72ccfc;">&quot;</span><span style="color:#62c1fb;">&gt;</span></div>
<div class="a" style="left:109.0px;top:162px;width:1px;height:28px;background:#4a4a4a"></div>
<div class="a" style="left:130.7px;top:162px;width:1px;height:28px;background:#4a4a4a"></div>
<div class="a ln" style="top:162px">45</div>
<div class="a code" style="left:152.3px;top:162px"><span style="color:#62c1fb;">&lt;image</span><span style="color:#d0d0d0;"> src</span><span style="color:#62c1fb;">=</span><span style="color:#72ccfc;">&quot;</span><span style="color:#f4756a;text-decoration:underline;text-decoration-color:#f4756a;text-underline-offset:4px">../../static/index/bg4.png</span><span style="color:#72ccfc;">&quot;</span><span style="color:#d0d0d0;"> mode</span><span style="color:#62c1fb;">&gt;&lt;/image&gt;&lt;text&gt;</span><span style="color:#e6e6e6;">条件买车</span><span style="color:#62c1fb;">&lt;/</span></div>
<div class="a" style="left:109.0px;top:190px;width:1px;height:28px;background:#4a4a4a"></div>
<div class="a" style="left:130.7px;top:190px;width:1px;height:28px;background:#4a4a4a"></div>
<div class="a code" style="left:152.3px;top:190px"><span style="color:#62c1fb;">text&gt;</span></div>
<div class="a" style="left:109.0px;top:218px;width:1px;height:28px;background:#4a4a4a"></div>
<div class="a ln" style="top:218px">46</div>
<div class="a code" style="left:130.7px;top:218px"><span style="color:#62c1fb;">&lt;/view&gt;</span></div>
<div class="a" style="left:109.0px;top:246px;width:1px;height:28px;background:#4a4a4a"></div>
<div class="a ln" style="top:246px">47</div>
<svg class="a" style="left:68px;top:251px" width="12" height="8" viewBox="0 0 12 8"><path d="M1.5 1.5L6 6l4.5-4.5" fill="none" stroke="#a0a0a0" stroke-width="1.2"/></svg>
<div class="a code" style="left:130.7px;top:246px"><span style="color:#62c1fb;">&lt;view</span><span style="color:#d0d0d0;"> data-event-opts</span><span style="color:#62c1fb;">=</span><span style="color:#72ccfc;">&quot;</span><span style="color:#f5c518;">{</span><span style="color:#d665d6;">{</span><span style="color:#f4756a;">[[&#x27;tap&#x27;,[[&#x27;sell&#x27;,[&#x27;$event&#x27;]]]]]</span><span style="color:#d665d6;">}</span><span style="color:#f5c518;">}</span><span style="color:#72ccfc;">&quot;</span></div>
<div class="a" style="left:109.0px;top:274px;width:1px;height:28px;background:#4a4a4a"></div>
<div class="a code" style="left:130.7px;top:274px"><span style="color:#d0d0d0;">class</span><span style="color:#62c1fb;">=</span><span style="color:#72ccfc;">&quot;</span><span style="color:#f4756a;">sort-items</span><span style="color:#72ccfc;">&quot;</span><span style="color:#d0d0d0;"> bindtap</span><span style="color:#62c1fb;">=</span><span style="color:#72ccfc;">&quot;</span><span style="color:#f4756a;">__e</span><span style="color:#72ccfc;">&quot;</span><span style="color:#62c1fb;">&gt;</span></div>
<div class="a" style="left:109.0px;top:302px;width:1px;height:28px;background:#4a4a4a"></div>
<div class="a" style="left:130.7px;top:302px;width:1px;height:28px;background:#4a4a4a"></div>
<div class="a ln" style="top:302px">48</div>
<div class="a code" style="left:152.3px;top:302px"><span style="color:#62c1fb;">&lt;image</span><span style="color:#d0d0d0;"> src</span><span style="color:#62c1fb;">=</span><span style="color:#72ccfc;">&quot;</span><span style="color:#f4756a;text-decoration:underline;text-decoration-color:#f4756a;text-underline-offset:4px">../../static/index/bg5.png</span><span style="color:#72ccfc;">&quot;</span><span style="color:#d0d0d0;"> mode</span><span style="color:#62c1fb;">&gt;&lt;/image&gt;&lt;text&gt;</span><span style="color:#e6e6e6;">条件卖车</span><span style="color:#62c1fb;">&lt;/</span></div>
<div class="a" style="left:109.0px;top:330px;width:1px;height:28px;background:#4a4a4a"></div>
<div class="a" style="left:130.7px;top:330px;width:1px;height:28px;background:#4a4a4a"></div>
<div class="a code" style="left:152.3px;top:330px"><span style="color:#62c1fb;">text&gt;</span></div>
<div class="a" style="left:109.0px;top:358px;width:1px;height:28px;background:#4a4a4a"></div>
<div class="a ln" style="top:358px">49</div>
<div class="a code" style="left:130.7px;top:358px"><span style="color:#62c1fb;">&lt;/view&gt;</span></div>
<div class="a" style="left:88px;top:386px;width:814px;height:28px;background:#434343"></div>
<div class="a" style="left:109.0px;top:386px;width:1px;height:28px;background:#4a4a4a"></div>
<div class="a ln" style="top:386px">50</div>
<svg class="a" style="left:68px;top:391px" width="12" height="8" viewBox="0 0 12 8"><path d="M1.5 1.5L6 6l4.5-4.5" fill="none" stroke="#a0a0a0" stroke-width="1.2"/></svg>
<div class="a code" style="left:130.7px;top:386px"><span style="color:#62c1fb;">&lt;view</span><span style="color:#d0d0d0;"> data-event-opts</span><span style="color:#62c1fb;">=</span><span style="color:#72ccfc;">&quot;</span><span style="color:#f5c518;">{</span><span style="color:#d665d6;outline:1px solid #777;outline-offset:-1px;">{</span><span style="color:#f4756a;">[[&#x27;tap&#x27;,[[&#x27;care&#x27;,[&#x27;$event&#x27;]]]]]</span><span style="color:#d665d6;outline:1px solid #777;outline-offset:-1px;">}</span><span style="color:#f5c518;">}</span><span style="color:#72ccfc;">&quot;</span></div>
<div class="a" style="left:109.0px;top:414px;width:1px;height:28px;background:#4a4a4a"></div>
<div class="a code" style="left:130.7px;top:414px"><span style="color:#d0d0d0;">class</span><span style="color:#62c1fb;">=</span><span style="color:#72ccfc;">&quot;</span><span style="color:#f4756a;">sort-items</span><span style="color:#72ccfc;">&quot;</span><span style="color:#d0d0d0;"> bindtap</span><span style="color:#62c1fb;">=</span><span style="color:#72ccfc;">&quot;</span><span style="color:#f4756a;">__e</span><span style="color:#72ccfc;">&quot;</span><span style="color:#62c1fb;">&gt;</span></div>
<div class="a" style="left:109.0px;top:442px;width:1px;height:28px;background:#4a4a4a"></div>
<div class="a" style="left:130.7px;top:442px;width:1px;height:28px;background:#4a4a4a"></div>
<div class="a ln" style="top:442px">51</div>
<div class="a code" style="left:152.3px;top:442px"><span style="color:#62c1fb;">&lt;image</span><span style="color:#d0d0d0;"> src</span><span style="color:#62c1fb;">=</span><span style="color:#72ccfc;">&quot;</span><span style="color:#f4756a;text-decoration:underline;text-decoration-color:#f4756a;text-underline-offset:4px">../../static/index/bg6.png</span><span style="color:#72ccfc;">&quot;</span><span style="color:#d0d0d0;"> mode</span><span style="color:#62c1fb;">&gt;&lt;/image&gt;&lt;text&gt;</span><span style="color:#e6e6e6;">车辆PK</span><span style="color:#62c1fb;">&lt;/</span></div>
<div class="a" style="left:109.0px;top:470px;width:1px;height:28px;background:#4a4a4a"></div>
<div class="a" style="left:130.7px;top:470px;width:1px;height:28px;background:#4a4a4a"></div>
<div class="a code" style="left:152.3px;top:470px"><span style="color:#62c1fb;">text&gt;</span></div>
<div class="a" style="left:109.0px;top:498px;width:1px;height:28px;background:#4a4a4a"></div>
<div class="a ln" style="top:498px">52</div>
<div class="a code" style="left:130.7px;top:498px"><span style="color:#62c1fb;">&lt;/view&gt;</span></div>
<div class="a ln" style="top:526px">53</div>
<div class="a code" style="left:109.0px;top:526px"><span style="color:#62c1fb;">&lt;/view&gt;</span></div>
<div class="a ln" style="top:554px">54</div>
<svg class="a" style="left:68px;top:559px" width="12" height="8" viewBox="0 0 12 8"><path d="M1.5 1.5L6 6l4.5-4.5" fill="none" stroke="#a0a0a0" stroke-width="1.2"/></svg>
<div class="a code" style="left:109.0px;top:554px"><span style="color:#62c1fb;">&lt;view</span><span style="color:#d0d0d0;"> class</span><span style="color:#62c1fb;">=</span><span style="color:#72ccfc;">&quot;</span><span style="color:#f4756a;">filters</span><span style="color:#72ccfc;">&quot;</span><span style="color:#62c1fb;">&gt;</span></div>
<div class="a" style="left:109.0px;top:582px;width:1px;height:28px;background:#4a4a4a"></div>
<div class="a ln" style="top:582px">55</div>
<svg class="a" style="left:68px;top:587px" width="12" height="8" viewBox="0 0 12 8"><path d="M1.5 1.5L6 6l4.5-4.5" fill="none" stroke="#a0a0a0" stroke-width="1.2"/></svg>
<div class="a code" style="left:130.7px;top:582px"><span style="color:#62c1fb;">&lt;view</span><span style="color:#d0d0d0;"> class</span><span style="color:#62c1fb;">=</span><span style="color:#72ccfc;">&quot;</span><span style="color:#f4756a;">cars-name</span><span style="color:#72ccfc;">&quot;</span><span style="color:#62c1fb;">&gt;</span></div>
<div class="a" style="left:109.0px;top:610px;width:1px;height:28px;background:#4a4a4a"></div>
<div class="a" style="left:130.7px;top:610px;width:1px;height:28px;background:#4a4a4a"></div>
<div class="a ln" style="top:610px">56</div>
<svg class="a" style="left:68px;top:615px" width="12" height="8" viewBox="0 0 12 8"><path d="M1.5 1.5L6 6l4.5-4.5" fill="none" stroke="#a0a0a0" stroke-width="1.2"/></svg>
<div class="a code" style="left:152.3px;top:610px"><span style="color:#62c1fb;">&lt;block</span><span style="color:#d0d0d0;"> wx:for</span><span style="color:#62c1fb;">=</span><span style="color:#72ccfc;">&quot;</span><span style="color:#f5c518;">{</span><span style="color:#d665d6;">{</span><span style="color:#f4756a;">cars</span><span style="color:#d665d6;">}</span><span style="color:#f5c518;">}</span><span style="color:#72ccfc;">&quot;</span><span style="color:#d0d0d0;"> wx:for-item</span><span style="color:#62c1fb;">=</span><span style="color:#72ccfc;">&quot;</span><span style="color:#f4756a;">car</span><span style="color:#72ccfc;">&quot;</span><span style="color:#d0d0d0;"> wx:for-index</span><span style="color:#62c1fb;">=</span><span style="color:#72ccfc;">&quot;</span><span style="color:#f4756a;">index</span><span style="color:#72ccfc;">&quot;</span></div>
<div class="a" style="left:109.0px;top:638px;width:1px;height:28px;background:#4a4a4a"></div>
<div class="a" style="left:130.7px;top:638px;width:1px;height:28px;background:#4a4a4a"></div>
<div class="a code" style="left:152.3px;top:638px"><span style="color:#d0d0d0;">wx:key</span><span style="color:#62c1fb;">=</span><span style="color:#72ccfc;">&quot;</span><span style="color:#f4756a;">index</span><span style="color:#72ccfc;">&quot;</span><span style="color:#62c1fb;">&gt;</span></div>
<div class="a" style="left:109.0px;top:666px;width:1px;height:28px;background:#4a4a4a"></div>
<div class="a" style="left:130.7px;top:666px;width:1px;height:28px;background:#4a4a4a"></div>
<div class="a" style="left:152.3px;top:666px;width:1px;height:28px;background:#4a4a4a"></div>
<div class="a ln" style="top:666px">57</div>
<svg class="a" style="left:68px;top:671px" width="12" height="8" viewBox="0 0 12 8"><path d="M1.5 1.5L6 6l4.5-4.5" fill="none" stroke="#a0a0a0" stroke-width="1.2"/></svg>
<div class="a code" style="left:174.0px;top:666px"><span style="color:#62c1fb;">&lt;view</span><span style="color:#d0d0d0;"> class</span><span style="color:#62c1fb;">=</span><span style="color:#72ccfc;">&quot;</span><span style="color:#f4756a;">cars-list</span><span style="color:#72ccfc;">&quot;</span><span style="color:#62c1fb;">&gt;</span></div>
<div class="a" style="left:109.0px;top:694px;width:1px;height:28px;background:#4a4a4a"></div>
<div class="a" style="left:130.7px;top:694px;width:1px;height:28px;background:#4a4a4a"></div>
<div class="a" style="left:152.3px;top:694px;width:1px;height:28px;background:#4a4a4a"></div>
<div class="a" style="left:174.0px;top:694px;width:1px;height:28px;background:#4a4a4a"></div>
<div class="a ln" style="top:694px">58</div>
<div class="a code" style="left:195.7px;top:694px"><span style="color:#62c1fb;">&lt;image</span><span style="color:#d0d0d0;"> src</span><span style="color:#62c1fb;">=</span><span style="color:#72ccfc;">&quot;</span><span style="text-decoration:underline;text-decoration-color:#f5c518;text-underline-offset:4px"><span style="color:#f5c518;">{</span><span style="color:#d665d6;">{</span><span style="color:#f4756a;">car.img</span><span style="color:#d665d6;">}</span><span style="color:#f5c518;">}</span></span><span style="color:#72ccfc;">&quot;</span><span style="color:#d0d0d0;"> mode</span><span style="color:#62c1fb;">&gt;&lt;/image&gt;&lt;text&gt;</span><span style="color:#f5c518;">{</span><span style="color:#d665d6;">{</span><span style="color:#e6e6e6;">car.name</span><span style="color:#d665d6;">}</span><span style="color:#f5c518;">}</span><span style="color:#62c1fb;">&lt;/text&gt;</span></div>
<div class="a" style="left:109.0px;top:722px;width:1px;height:28px;background:#4a4a4a"></div>
<div class="a" style="left:130.7px;top:722px;width:1px;height:28px;background:#4a4a4a"></div>
<div class="a" style="left:152.3px;top:722px;width:1px;height:28px;background:#4a4a4a"></div>
<div class="a ln" style="top:722px">59</div>
<div class="a code" style="left:174.0px;top:722px"><span style="color:#62c1fb;">&lt;/view&gt;</span></div>
<div class="a" style="left:109.0px;top:750px;width:1px;height:28px;background:#4a4a4a"></div>
<div class="a" style="left:130.7px;top:750px;width:1px;height:28px;background:#4a4a4a"></div>
<div class="a ln" style="top:750px">60</div>
<div class="a code" style="left:152.3px;top:750px"><span style="color:#62c1fb;">&lt;/block&gt;</span></div>
<div class="a" style="left:109.0px;top:778px;width:1px;height:28px;background:#4a4a4a"></div>
<div class="a ln" style="top:778px">61</div>
<div class="a code" style="left:130.7px;top:778px"><span style="color:#62c1fb;">&lt;/view&gt;</span></div>
<div class="a" style="left:109.0px;top:806px;width:1px;height:28px;background:#4a4a4a"></div>
<div class="a ln" style="top:806px">62</div>
<svg class="a" style="left:68px;top:811px" width="12" height="8" viewBox="0 0 12 8"><path d="M1.5 1.5L6 6l4.5-4.5" fill="none" stroke="#a0a0a0" stroke-width="1.2"/></svg>
<div class="a code" style="left:130.7px;top:806px"><span style="color:#62c1fb;">&lt;view</span><span style="color:#d0d0d0;"> class</span><span style="color:#62c1fb;">=</span><span style="color:#72ccfc;">&quot;</span><span style="color:#f4756a;">cars-price</span><span style="color:#72ccfc;">&quot;</span><span style="color:#62c1fb;">&gt;</span></div>
<div class="a" style="left:109.0px;top:834px;width:1px;height:28px;background:#4a4a4a"></div>
<div class="a" style="left:130.7px;top:834px;width:1px;height:28px;background:#4a4a4a"></div>
<div class="a ln" style="top:834px">63</div>
<div class="a code" style="left:152.3px;top:834px"><span style="color:#62c1fb;">&lt;view</span><span style="color:#d0d0d0;"> class</span><span style="color:#62c1fb;">=</span><span style="color:#72ccfc;">&quot;</span><span style="color:#f4756a;">price-list</span><span style="color:#72ccfc;">&quot;</span><span style="color:#62c1fb;">&gt;</span><span style="color:#e6e6e6;">价格</span><span style="color:#62c1fb;">&lt;/view&gt;</span></div>
<div class="a" style="left:109.0px;top:862px;width:1px;height:28px;background:#4a4a4a"></div>
<div class="a" style="left:130.7px;top:862px;width:1px;height:28px;background:#4a4a4a"></div>
<div class="a ln" style="top:862px">64</div>
<svg class="a" style="left:68px;top:867px" width="12" height="8" viewBox="0 0 12 8"><path d="M1.5 1.5L6 6l4.5-4.5" fill="none" stroke="#a0a0a0" stroke-width="1.2"/></svg>
<div class="a code" style="left:152.3px;top:862px"><span style="color:#62c1fb;">&lt;block</span><span style="color:#d0d0d0;"> wx:for</span><span style="color:#62c1fb;">=</span><span style="color:#72ccfc;">&quot;</span><span style="color:#f5c518;">{</span><span style="color:#d665d6;">{</span><span style="color:#f4756a;">prices</span><span style="color:#d665d6;">}</span><span style="color:#f5c518;">}</span><span style="color:#72ccfc;">&quot;</span><span style="color:#d0d0d0;"> wx:for-item</span><span style="color:#62c1fb;">=</span><span style="color:#72ccfc;">&quot;</span><span style="color:#f4756a;">price</span><span style="color:#72ccfc;">&quot;</span><span style="color:#d0d0d0;"> wx:for-index</span><span style="color:#62c1fb;">=</span><span style="color:#72ccfc;">&quot;</span><span style="color:#f4756a;">index</span><span style="color:#72ccfc;">&quot;</span></div>
<div class="a" style="left:109.0px;top:890px;width:1px;height:28px;background:#4a4a4a"></div>
<div class="a" style="left:130.7px;top:890px;width:1px;height:28px;background:#4a4a4a"></div>
<div class="a code" style="left:152.3px;top:890px"><span style="color:#d0d0d0;">wx:key</span><span style="color:#62c1fb;">=</span><span style="color:#72ccfc;">&quot;</span><span style="color:#f4756a;">index</span><span style="color:#72ccfc;">&quot;</span><span style="color:#62c1fb;">&gt;</span></div>
<div class="a" style="left:87px;top:52px;width:1px;height:855px;background:#3a3a3a"></div>
<div class="a" style="left:0;top:30px;width:902px;height:22px;background:#2a2a2a;box-shadow:0 2px 3px rgba(0,0,0,0.35)">
<svg class="a" style="left:8px;top:5px" width="14" height="12" viewBox="0 0 14 12"><g fill="#a8a8a8"><rect x="0" y="0.5" width="1.4" height="1.4"/><rect x="0" y="3.7" width="1.4" height="1.4"/><rect x="0" y="6.9" width="1.4" height="1.4"/><rect x="0" y="10.1" width="1.4" height="1.4"/><rect x="3" y="0.6" width="11" height="1.2"/><rect x="3" y="3.8" width="11" height="1.2"/><rect x="3" y="7" width="11" height="1.2"/><rect x="3" y="10.2" width="11" height="1.2"/></g></svg>
<svg class="a" style="left:40px;top:4px" width="10" height="14" viewBox="0 0 10 14"><path d="M0.6 0.6h8.8v12.5L5 9.2 0.6 13.1z" fill="none" stroke="#a8a8a8" stroke-width="1.1" stroke-linejoin="round"/></svg>
<svg class="a" style="left:68px;top:5px" width="14" height="12" viewBox="0 0 14 12"><path d="M13.5 6H1M6 1L1 6l5 5" fill="none" stroke="#a8a8a8" stroke-width="1.1"/></svg>
<svg class="a" style="left:97px;top:5px" width="14" height="12" viewBox="0 0 14 12"><path d="M0.5 6H13M8 1l5 5-5 5" fill="none" stroke="#a8a8a8" stroke-width="1.1"/></svg>
<div class="a bc" style="left:126px;top:3px">pages</div>
<svg class="a" style="left:169px;top:6px" width="6" height="10" viewBox="0 0 6 10"><path d="M1 1l4 4-4 4" fill="none" stroke="#8a8a8a" stroke-width="1"/></svg>
<div class="a bc" style="left:179px;top:3px">xinnengyuanershouche</div>
<svg class="a" style="left:327px;top:6px" width="6" height="10" viewBox="0 0 6 10"><path d="M1 1l4 4-4 4" fill="none" stroke="#8a8a8a" stroke-width="1"/></svg>
<svg class="a" style="left:337px;top:4px" width="12" height="14" viewBox="0 0 12 14"><path d="M1.5 0h6.5L11.5 3.5V12.5A1.5 1.5 0 0 1 10 14H1.5A1.5 1.5 0 0 1 0 12.5V1.5A1.5 1.5 0 0 1 1.5 0z" fill="#7bbf3c"/><path d="M7.3 1.6L10.6 4.9H7.3z" fill="#263018"/><path d="M4.3 7.6L2.6 9.3l1.7 1.7M7.2 7.6l1.7 1.7-1.7 1.7" fill="none" stroke="#2c3a1e" stroke-width="1.2"/></svg>
<div class="a bc" style="left:357px;top:3px">list.wxml</div>
<svg class="a" style="left:413px;top:6px" width="6" height="10" viewBox="0 0 6 10"><path d="M1 1l4 4-4 4" fill="none" stroke="#8a8a8a" stroke-width="1"/></svg>
<svg class="a" style="left:426px;top:4px" width="14" height="13" viewBox="0 0 14 13"><path d="M7 1L1 3.5v6L7 12l6-2.5v-6zM1 3.5L7 6l6-2.5M7 6v6" fill="none" stroke="#5a8fd0" stroke-width="1"/></svg>
<div class="a bc" style="left:447px;top:3px">mescroll-uni</div>
<svg class="a" style="left:527px;top:6px" width="6" height="10" viewBox="0 0 6 10"><path d="M1 1l4 4-4 4" fill="none" stroke="#8a8a8a" stroke-width="1"/></svg>
<svg class="a" style="left:538px;top:4px" width="14" height="13" viewBox="0 0 14 13"><path d="M7 1L1 3.5v6L7 12l6-2.5v-6zM1 3.5L7 6l6-2.5M7 6v6" fill="none" stroke="#5a8fd0" stroke-width="1"/></svg>
<div class="a bc" style="left:560px;top:3px">view.sort</div>
<svg class="a" style="left:620px;top:6px" width="6" height="10" viewBox="0 0 6 10"><path d="M1 1l4 4-4 4" fill="none" stroke="#8a8a8a" stroke-width="1"/></svg>
<svg class="a" style="left:632px;top:4px" width="14" height="13" viewBox="0 0 14 13"><path d="M7 1L1 3.5v6L7 12l6-2.5v-6zM1 3.5L7 6l6-2.5M7 6v6" fill="none" stroke="#5a8fd0" stroke-width="1"/></svg>
<div class="a bc" style="left:653px;top:3px">view.sort-items</div>
</div>
<div class="a" style="left:632px;top:806px;width:200px;text-align:center;font-size:14px;line-height:18px;color:#e8e8e8;letter-spacing:0.9px;white-space:nowrap;padding-left:0.9px">万枫(广州)科技有限公司</div><div class="a" style="left:631px;top:824px;width:200px;text-align:center;font-size:16px;line-height:18px;color:#e8e8e8">www.wanfenggz.com</div>
</div><!--/ed-->
</body></html>
